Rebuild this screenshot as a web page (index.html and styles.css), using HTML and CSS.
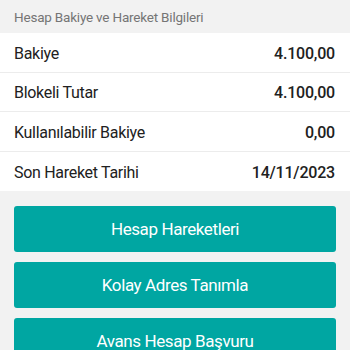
FILE: index.html
```html
<!DOCTYPE html>
<html lang="tr">
<head>
    <meta charset="UTF-8">
    <meta name="viewport" content="width=device-width, initial-scale=1.0">
    <title>Hesap Bakiye</title>
    <link rel="stylesheet" href="styles.css">
</head>
<body>
    <div class="section-title">Hesap Bakiye ve Hareket Bilgileri</div>

    <div class="info-list">
        <div class="info-row">
            <span class="label">Bakiye</span>
            <span class="value">4.100,00</span>
        </div>
        <div class="info-row">
            <span class="label">Blokeli Tutar</span>
            <span class="value">4.100,00</span>
        </div>
        <div class="info-row">
            <span class="label">Kullanılabilir Bakiye</span>
            <span class="value">0,00</span>
        </div>
        <div class="info-row">
            <span class="label">Son Hareket Tarihi</span>
            <span class="value">14/11/2023</span>
        </div>
    </div>

    <div class="actions">
        <button class="action-btn">Hesap Hareketleri</button>
        <button class="action-btn">Kolay Adres Tanımla</button>
        <button class="action-btn">Avans Hesap Başvuru</button>
    </div>
</body>
</html>
```

FILE: styles.css
```css
* {
    margin: 0;
    padding: 0;
    box-sizing: border-box;
}

body {
    font-family: Roboto, "Liberation Sans", sans-serif;
    background: #f2f2f2;
    color: #212121;
}

.section-title {
    height: 33px;
    padding: 1px 14px 0;
    display: flex;
    align-items: center;
    font-size: 13.5px;
    letter-spacing: -0.2px;
    color: #757575;
}

.info-list {
    background: white;
}

.info-row {
    height: 39.5px;
    padding: 2px 15px 0 14px;
    display: flex;
    align-items: center;
    justify-content: space-between;
    font-size: 16px;
    letter-spacing: -0.3px;
    border-bottom: 1px solid #ececec;
}

.info-row:last-child {
    border-bottom: none;
}

.value {
    font-weight: 500;
    letter-spacing: -0.2px;
}

.actions {
    display: flex;
    flex-direction: column;
    gap: 10px;
    padding: 15px 14px;
}

.action-btn {
    height: 46px;
    border: none;
    border-radius: 3px;
    background: #00a6a2;
    color: white;
    font-family: inherit;
    font-size: 17px;
    letter-spacing: -0.4px;
}
```
